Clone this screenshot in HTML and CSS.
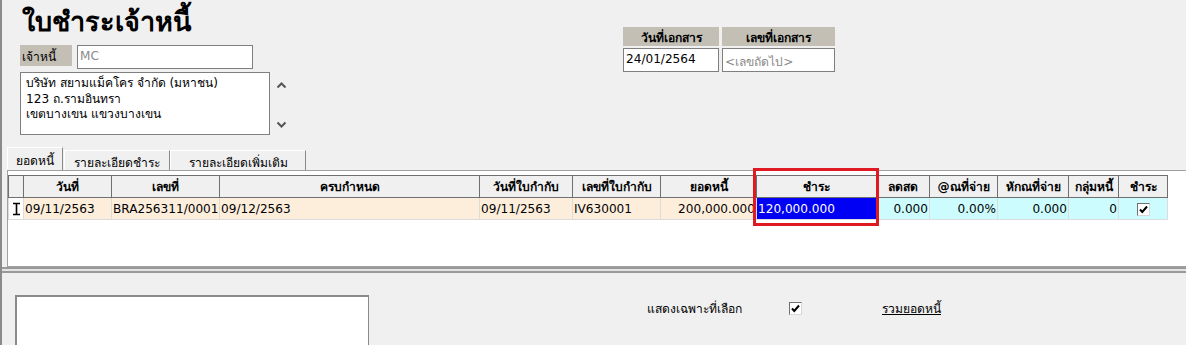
FILE: index.html
```html
<!DOCTYPE html>
<html lang="th">
<head>
    <meta charset="UTF-8">
    <title>ใบชำระเจ้าหนี้</title>
    <link rel="stylesheet" href="styles.css">
</head>
<body>
<div class="window">

    <div class="top">
        <div class="head">
            <h1 class="title">ใบชำระเจ้าหนี้</h1>
            <div class="creditor">
                <span class="label">เจ้าหนี้</span>
                <div class="input code">MC</div>
            </div>
            <div class="addr-row">
                <div class="address">
                    บริษัท สยามแม็คโคร จำกัด (มหาชน)<br>
                    123 ถ.รามอินทรา<br>
                    เขตบางเขน แขวงบางเขน
                </div>
                <div class="scroll">
                    <svg width="11" height="8" viewBox="0 0 11 8"><path d="M1.5 6.5 L5.5 2.5 L9.5 6.5" fill="none" stroke="#555" stroke-width="2"/></svg>
                    <svg width="11" height="8" viewBox="0 0 11 8"><path d="M1.5 1.5 L5.5 5.5 L9.5 1.5" fill="none" stroke="#555" stroke-width="2"/></svg>
                </div>
            </div>
        </div>

        <div class="docinfo">
            <div class="doc-col date-col">
                <div class="doc-head">วันที่เอกสาร</div>
                <div class="input">24/01/2564</div>
            </div>
            <div class="doc-col no-col">
                <div class="doc-head">เลขที่เอกสาร</div>
                <div class="input muted">&lt;เลขถัดไป&gt;</div>
            </div>
        </div>
    </div>

    <div class="tabs">
        <div class="tab active">ยอดหนี้</div>
        <div class="tab">รายละเอียดชำระ</div>
        <div class="tab">รายละเอียดเพิ่มเติม</div>
    </div>

    <div class="grid">
        <table class="lines">
            <colgroup>
                <col style="width:15px">
                <col style="width:88px">
                <col style="width:108px">
                <col style="width:260px">
                <col style="width:93px">
                <col style="width:88px">
                <col style="width:96px">
                <col style="width:120px">
                <col style="width:53px">
                <col style="width:68px">
                <col style="width:71px">
                <col style="width:50px">
                <col style="width:49px">
            </colgroup>
            <tr>
                <th class="sel"></th>
                <th>วันที่</th>
                <th>เลขที่</th>
                <th>ครบกำหนด</th>
                <th>วันที่ใบกำกับ</th>
                <th>เลขที่ใบกำกับ</th>
                <th>ยอดหนี้</th>
                <th>ชำระ</th>
                <th>ลดสด</th>
                <th>@ณที่จ่าย</th>
                <th>หักณที่จ่าย</th>
                <th>กลุ่มหนี้</th>
                <th>ชำระ</th>
            </tr>
            <tr class="row">
                <td class="sel">
                    <svg width="9" height="14" viewBox="0 0 9 14"><path d="M1 1.5 H8 M1 12.5 H8 M4.5 1.5 V12.5" fill="none" stroke="#000" stroke-width="1.6"/></svg>
                </td>
                <td>09/11/2563</td>
                <td>BRA256311/0001</td>
                <td>09/12/2563</td>
                <td>09/11/2563</td>
                <td>IV630001</td>
                <td class="num">200,000.000</td>
                <td class="pay">120,000.000</td>
                <td class="num cyan">0.000</td>
                <td class="num cyan">0.00%</td>
                <td class="num cyan">0.000</td>
                <td class="num cyan">0</td>
                <td class="cyan center">
                    <span class="check"><svg width="11" height="11" viewBox="0 0 11 11"><path d="M2 5.5 L4.3 8 L9 2.5" fill="none" stroke="#000" stroke-width="2"/></svg></span>
                </td>
            </tr>
        </table>
        <span class="mark"></span>
    </div>

    <div class="split"></div>

    <div class="bottom">
        <div class="memo"></div>
        <div class="filter">
            <span class="filter-label">แสดงเฉพาะที่เลือก</span>
            <span class="check"><svg width="11" height="11" viewBox="0 0 11 11"><path d="M2 5.5 L4.3 8 L9 2.5" fill="none" stroke="#000" stroke-width="2"/></svg></span>
            <a class="total" href="#">รวมยอดหนี้</a>
        </div>
    </div>

</div>
</body>
</html>
```

FILE: styles.css
```css
* {
    box-sizing: border-box;
}
body {
    margin: 0;
    background-color: #f0f0f0;
    font-family: "DejaVu Sans", Tahoma, sans-serif;
    font-size: 11px;
    font-size-adjust: 0.6;
    color: #000;
    overflow: hidden;
}
.window {
    height: 345px;
    border-left: 2px solid #8a8a8a;
    overflow: hidden;
}

/* header area */
.top {
    display: flex;
    height: 147px;
}
.head {
    padding-left: 18px;
    width: 600px;
}
.title {
    margin: 4px 0 0 2px;
    font-size: 27px;
    font-size-adjust: none;
    line-height: 36px;
    font-weight: bold;
}
.creditor {
    display: flex;
    margin-top: 5px;
    height: 23px;
}
.label {
    width: 52px;
    height: 21px;
    background-color: #c3bfb5;
    padding: 2px 0 0 2px;
}
.input {
    background-color: #fff;
    border: 1px solid #7f7f7f;
    height: 24px;
    padding: 3px 0 0 2px;
    white-space: nowrap;
}
.code {
    margin-left: 5px;
    width: 176px;
    color: #8a8a8a;
}
.muted {
    color: #8a8a8a;
}
.addr-row {
    display: flex;
    margin-top: 4px;
}
.address {
    width: 250px;
    height: 63px;
    background-color: #fff;
    border: 1px solid #7f7f7f;
    padding: 3px 0 0 5px;
    line-height: 15.5px;
}
.scroll {
    display: flex;
    flex-direction: column;
    justify-content: space-between;
    padding: 9px 0 6px 6px;
}

.docinfo {
    display: flex;
    gap: 3px;
    margin-top: 27px;
    margin-left: 21px;
    height: 45px;
}
.doc-col {
    display: flex;
    flex-direction: column;
    gap: 2px;
}
.date-col {
    width: 96px;
}
.no-col {
    width: 113px;
}
.doc-head {
    background-color: #c3bfb5;
    height: 19px;
    text-align: center;
    font-weight: bold;
    padding-top: 1px;
}

/* tabs */
.tabs {
    display: flex;
    align-items: flex-end;
    padding-left: 5px;
    height: 23px;
}
.tab {
    height: 20px;
    padding-top: 2px;
    text-align: center;
    border-top: 1px solid #fff;
    border-left: 1px solid #fff;
    border-right: 1px solid #8a8a8a;
    white-space: nowrap;
}
.tab.active {
    width: 56px;
    height: 23px;
    padding-top: 3px;
    margin-right: 1px;
}
.tab:nth-child(2) {
    width: 106px;
}
.tab:nth-child(3) {
    width: 136px;
}

/* grid */
.grid {
    position: relative;
    margin-left: 5px;
    height: 97px;
    background-color: #fff;
    border-top: 1px solid #a0a0a0;
    border-left: 1px solid #a0a0a0;
    border-bottom: 1px solid #a0a0a0;
    padding-top: 4px;
}
.lines {
    border-collapse: collapse;
    table-layout: fixed;
    width: 1159px;
    white-space: nowrap;
}
.lines th {
    height: 22px;
    background-color: #f0f0f0;
    border: 1px solid #6f6f6f;
    font-weight: bold;
    text-align: center;
    padding: 0;
}
.lines td {
    height: 22px;
    background-color: #fdeedc;
    border: 1px solid #dcdcdc;
    padding: 0 1px;
    overflow: hidden;
}
.lines td.sel {
    background-color: #fff;
    padding: 0;
    text-align: center;
}
.lines td.sel svg {
    display: block;
    margin: 0 auto;
}
.lines .num {
    text-align: right;
}
.lines .center {
    text-align: center;
}
.lines td.cyan {
    background-color: #ccfcfd;
}
.lines td.pay {
    background-color: #0000f4;
    color: #fff;
}
.mark {
    position: absolute;
    left: 745px;
    top: -3px;
    width: 126px;
    height: 58px;
    border: 3px solid #e01a22;
}

.check {
    display: inline-block;
    width: 13px;
    height: 13px;
    background-color: #fff;
    border-top: 1px solid #707070;
    border-left: 1px solid #707070;
    border-right: 1px solid #d8d8d8;
    border-bottom: 1px solid #d8d8d8;
    vertical-align: middle;
    line-height: 0;
}

.split {
    height: 6px;
    border-top: 2px solid #9a9a9a;
    border-bottom: 2px solid #9a9a9a;
    background-color: #e4e4e4;
}

/* bottom area */
.bottom {
    display: flex;
    padding-top: 22px;
}
.memo {
    margin-left: 13px;
    width: 354px;
    height: 60px;
    background-color: #fff;
    border-top: 2px solid #8a8a8a;
    border-left: 2px solid #8a8a8a;
    border-right: 1px solid #8a8a8a;
}
.filter {
    display: flex;
    align-items: center;
    height: 26px;
    margin-left: 278px;
}
.filter-label {
    width: 142px;
}
.total {
    margin-left: 80px;
    color: #000;
    text-decoration: underline;
}
```
